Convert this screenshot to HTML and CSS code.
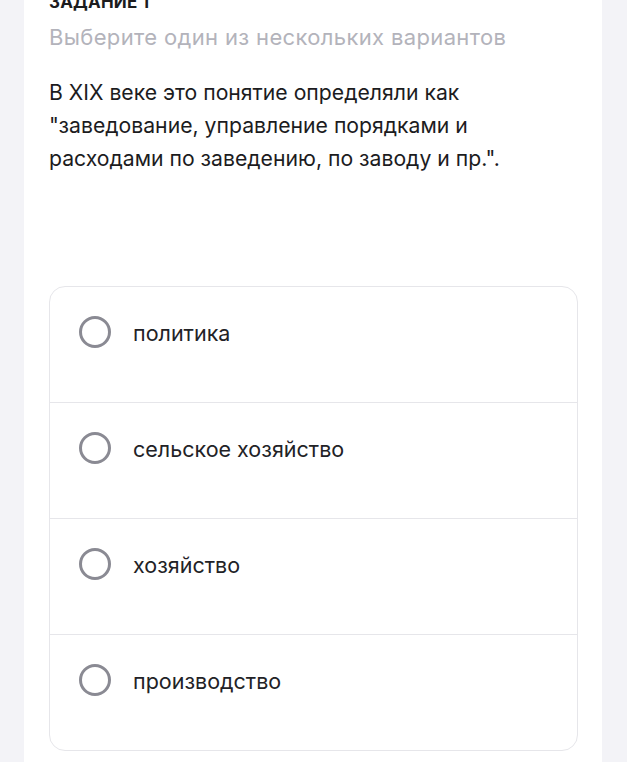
FILE: index.html
```html
<!DOCTYPE html>
<html lang="ru">
<head>
  <meta charset="UTF-8">
  <meta name="viewport" content="width=device-width, initial-scale=1.0">
  <title>Задание 1</title>
  <link rel="stylesheet" href="styles.css">
</head>
<body>
  <div class="task-card">
    <div class="task-title">Задание 1</div>
    <div class="task-hint">Выберите один из нескольких вариантов</div>

    <p class="task-question">В XIX веке это понятие определяли как "заведование, управление порядками и расходами по заведению, по заводу и пр.".</p>

    <div class="options">
      <label class="option">
        <span class="radio"></span>
        <span class="option-text">политика</span>
      </label>
      <label class="option">
        <span class="radio"></span>
        <span class="option-text">сельское хозяйство</span>
      </label>
      <label class="option">
        <span class="radio"></span>
        <span class="option-text">хозяйство</span>
      </label>
      <label class="option">
        <span class="radio"></span>
        <span class="option-text">производство</span>
      </label>
    </div>
  </div>
</body>
</html>
```

FILE: styles.css
```css
body {
  margin: 0;
  background-color: #f3f3f7;
  font-family: Inter, "Noto Sans", sans-serif;
  color: #1c1c1e;
}

.task-card {
  width: 578px;
  margin: -9px 0 0 24px;
  padding: 0 24px 40px 25px;
  box-sizing: border-box;
  background-color: #fff;
}

.task-title {
  font-size: 17px;
  line-height: 22px;
  font-weight: 700;
  text-transform: uppercase;
  letter-spacing: 0.2px;
}

.task-hint {
  margin-top: 9px;
  font-size: 22px;
  line-height: 30px;
  letter-spacing: 0.35px;
  color: #b3b3bb;
}

.task-question {
  margin: 24px 0 0;
  font-size: 21.2px;
  line-height: 33px;
  padding-right: 60px;
}

.options {
  margin-top: 111px;
  border: 1px solid #e6e6ea;
  border-radius: 16px;
}

.option {
  display: flex;
  align-items: center;
  gap: 22px;
  height: 115px;
  padding: 0 29px 26px;
  box-sizing: border-box;
  cursor: pointer;
}

.option + .option {
  height: 116px;
  border-top: 1px solid #e6e6ea;
}

.radio {
  width: 32px;
  height: 32px;
  border: 3px solid #8a8a93;
  border-radius: 50%;
  box-sizing: border-box;
  flex-shrink: 0;
}

.option-text {
  font-size: 21.5px;
  color: #222226;
  padding-top: 3px;
}
```
